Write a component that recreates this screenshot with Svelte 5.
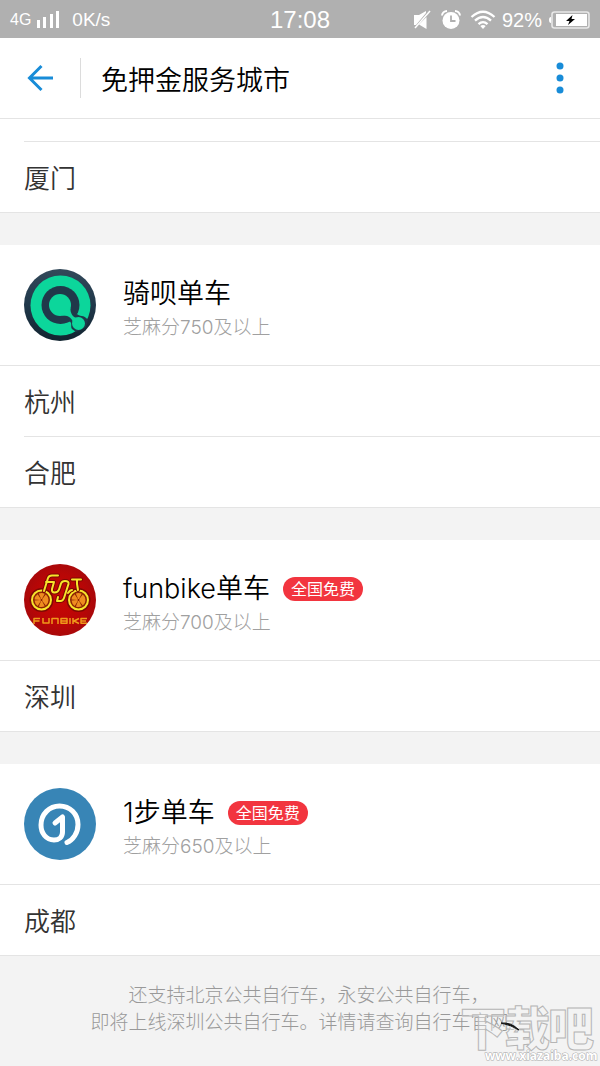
<script>
  const groups = [
    {
      name: '骑呗单车',
      note: '芝麻分750及以上',
      logo: 'qibei',
      free: false,
      cities: ['杭州', '合肥']
    },
    {
      name: 'funbike单车',
      note: '芝麻分700及以上',
      logo: 'funbike',
      free: true,
      cities: ['深圳']
    },
    {
      name: '1步单车',
      note: '芝麻分650及以上',
      logo: 'yibu',
      free: true,
      cities: ['成都']
    }
  ];
</script>

{#snippet qibei()}
  <svg class="logo" viewBox="0 0 72 72" aria-hidden="true">
    <defs>
      <linearGradient id="navy" x1="0" y1="0" x2="0" y2="1">
        <stop offset="0" stop-color="#33495a" />
        <stop offset="0.5" stop-color="#20384a" />
        <stop offset="1" stop-color="#122430" />
      </linearGradient>
    </defs>
    <circle cx="36" cy="36" r="36" fill="url(#navy)" />
    <circle cx="36.500" cy="36.500" r="30" fill="#0cd69b" />
    <circle cx="36.500" cy="36" r="19" fill="#20384a" />
    <path d="M53 45C55 48 60 45 64 51L62 58L52 63L48 60C46 57 49 54 45 52Z" fill="#20384a" />
    <circle cx="36" cy="36" r="11" fill="#0cd69b" />
    <path d="M46.500 39C46 44 49 49 54 49L49 55C49 49 44 46 38 46.500Z" fill="#0cd69b" />
    <circle cx="54.500" cy="54.500" r="6.500" fill="#0cd69b" />
  </svg>
{/snippet}

{#snippet funbike()}
  <svg class="logo" viewBox="0 0 72 72" aria-hidden="true">
    <defs>
      <radialGradient id="red">
        <stop offset="0" stop-color="#c80704" />
        <stop offset="0.7" stop-color="#b90606" />
        <stop offset="1" stop-color="#a9080a" />
      </radialGradient>
    </defs>
    <circle cx="36" cy="36" r="36" fill="url(#red)" />
    {#each [17.5, 54.5] as x}
      <circle cx={x} cy="36" r="9.500" fill="#8d2503" stroke="#7d0803" stroke-width="5" />
      <circle cx={x} cy="36" r="9.500" fill="#8d2503" stroke="#f6e52b" stroke-width="2" />
      <circle cx={x} cy="36" r="4" fill="none" stroke="#ef8d20" stroke-width="6" stroke-dasharray="3.500 0.690" />
    {/each}
    {#each [{ c: '#7d0803', w: 4 }, { c: '#f6e52b', w: 2 }] as s}
      <g fill="none" stroke={s.c} stroke-width={s.w} stroke-linejoin="round" stroke-linecap="round">
        <path d="M20 27L24 14Q25 11.500 28 11.500H34M22 18H29" />
        <path d="M30 18L28 25Q27.500 28.500 30.500 28.500Q34 28.500 35 25.500L37 19.500Q38 17 41 17Q45 17 44.500 20L40 34Q39 37 36.500 37H33L34 33" />
        <path d="M48 15.500H57M53 15.500V20L54 26M44 29Q46 26 48 26" />
      </g>
    {/each}
    <g fill="none" stroke="#ef9a1b" stroke-width="1.500" stroke-linejoin="round">
      <path d="M10 60V54.500H16M10 57H15.500M19 54V59H25V54M28 60V54.500H34V60M37 54.500H43V59.200H37ZM37 57H43M46 54V60M49 54V60M55 54.500L50 57L55 59.500M63 54.500H57V59.200H63M57 57H62" />
    </g>
  </svg>
{/snippet}

{#snippet yibu()}
  <svg class="logo" viewBox="0 0 72 72" aria-hidden="true">
    <circle cx="36" cy="36" r="36" fill="#3885b6" />
    <path
      d="M31 35L38.500 29V44C38.500 49 35 52 30 52C22 52 17 45 17 37C17 26 25.500 18 35.500 18C46 18 54 26 54 36.500C54 45 49 52 43 54.500"
      fill="none"
      stroke="#fff"
      stroke-width="5"
      stroke-linecap="round"
      stroke-linejoin="round"
    />
  </svg>
{/snippet}

<div class="page">
  <div class="status">
    <div class="side">
      <span class="net">4G</span>
      <svg class="bars" width="24" height="18" viewBox="0 0 24 18" aria-hidden="true">
        <path d="M1 9H4V17H1ZM7 6H10V17H7ZM14 3H17V17H14ZM20 0H23V17H20Z" fill="#fff" />
      </svg>
      <span class="speed">0K/s</span>
    </div>
    <time class="clock">17:08</time>
    <div class="side end">
      <svg width="20" height="20" viewBox="0 0 20 20" aria-hidden="true">
        <path d="M2 5H7L14 1V3L4 15H2ZM14.500 7V19L7 14.500Z" fill="#fff" />
        <path d="M18 1L3 18" stroke="#fff" stroke-width="1.500" />
      </svg>
      <svg class="alarm" width="20" height="20" viewBox="0 0 20 20" aria-hidden="true">
        <circle cx="10" cy="10.500" r="8.500" fill="#fff" />
        <path d="M1 5.500A5 5 0 0 1 6 1M14 1A5 5 0 0 1 19 5.500" fill="none" stroke="#fff" stroke-width="2" />
        <path d="M10 5.500V11H14.500" fill="none" stroke="#b0b0b0" stroke-width="1.800" />
      </svg>
      <svg class="wifi" width="26" height="20" viewBox="0 0 26 20" aria-hidden="true">
        <g fill="none" stroke="#fff" stroke-width="2.300">
          <path d="M1.500 7Q13-3.500 24.500 7M5 10.700Q13 3.200 21 10.700M8.500 14.200Q13 10 17.500 14.200" />
        </g>
        <path d="M10.300 16Q13 14 15.700 16L13 19Z" fill="#fff" />
      </svg>
      <span class="percent">92%</span>
      <svg class="battery" width="42" height="18" viewBox="0 0 42 18" aria-hidden="true">
        <rect x="4" y="1" width="37" height="16" rx="2.500" fill="none" stroke="#e8e8e8" stroke-width="1.600" />
        <path d="M3 6Q1 6 1 9Q1 12 3 12Z" fill="#fff" />
        <path d="M8 3H39V15H8Z" fill="#fff" />
        <path d="M24.500 4L18 10H21.500L20 14L27 8H23.500Z" fill="#000" />
      </svg>
    </div>
  </div>

  <header>
    <button class="back" aria-label="返回">
      <svg width="28" height="28" viewBox="0 0 28 28" aria-hidden="true">
        <path d="M15.500 2L3.500 14L15.500 26M3.500 14H27" fill="none" stroke="#188cd8" stroke-width="3" />
      </svg>
    </button>
    <h1>免押金服务城市</h1>
    <button class="more" aria-label="更多">
      <svg width="8" height="32" viewBox="0 0 8 32" aria-hidden="true">
        <g fill="#188cd8">
          <circle cx="4" cy="4" r="3.500" />
          <circle cx="4" cy="16" r="3.500" />
          <circle cx="4" cy="28" r="3.500" />
        </g>
      </svg>
    </button>
  </header>

  <main>
    <ul class="cities first">
      <li>厦门</li>
    </ul>
    {#each groups as g}
      <section>
        <div class="brand">
          {#if g.logo === 'qibei'}
            {@render qibei()}
          {:else if g.logo === 'funbike'}
            {@render funbike()}
          {:else}
            {@render yibu()}
          {/if}
          <div class="info">
            <div class="line">
              <h2>{g.name}</h2>
              {#if g.free}<span class="tag">全国免费</span>{/if}
            </div>
            <p>{g.note}</p>
          </div>
        </div>
        <ul class="cities">
          {#each g.cities as city}
            <li>{city}</li>
          {/each}
        </ul>
      </section>
    {/each}
  </main>

  <footer>
    <p>还支持北京公共自行车，永安公共自行车，<br />即将上线深圳公共自行车。详情请查询自行车官网。</p>
    <div class="mark">
      <svg width="140" height="64" viewBox="0 0 140 64" aria-hidden="true">
        <g class="big">
          <text x="0" y="43" font-size="46">下</text>
          <text x="44" y="43" font-size="46">载</text>
          <text x="88" y="43" font-size="46">吧</text>
        </g>
        <text class="url" x="25" y="58" font-size="12">www.xiazaiba.com</text>
        <path d="M41 21Q51 20 59 28Q51 23 41 21Z" fill="#111" stroke="#111" />
      </svg>
    </div>
  </footer>
</div>

<style>
  :global(body) {
    margin: 0;
    background: #f3f3f3;
  }
  .page {
    font-family: Inter, 'Noto Sans CJK SC', sans-serif;
    color: #000;
    background: #fff;
  }
  h1,
  h2,
  p,
  ul {
    margin: 0;
    padding: 0;
    font-weight: 350;
  }
  .status {
    display: grid;
    grid-template-columns: 1fr auto 1fr;
    align-items: center;
    height: 38px;
    padding: 2px 10px 0;
    background: #b0b0b0;
    color: #fff;
    box-sizing: border-box;
    font-family: 'Liberation Sans', sans-serif;
    line-height: 36px;
  }
  .side {
    display: flex;
    align-items: center;
  }
  .end {
    justify-content: flex-end;
  }
  .net {
    font-size: 16px;
  }
  .bars {
    margin: 0 12px 0 5px;
  }
  .speed {
    font-size: 19px;
  }
  .percent {
    font-size: 20px;
  }
  .clock {
    font-size: 24px;
  }
  .alarm {
    margin: 0 9px;
  }
  .wifi {
    margin-right: 6px;
  }
  .battery {
    margin-left: 6px;
  }
  header {
    display: flex;
    align-items: center;
    height: 80px;
    border-bottom: 1px solid #e4e4e4;
    padding: 0 24px;
  }
  button {
    display: flex;
    align-items: center;
    border: 0;
    padding: 0;
    background: none;
  }
  .back {
    width: 57px;
    height: 40px;
    border-right: 1px solid #dcdcdc;
  }
  .back svg {
    margin-left: 2px;
  }
  h1 {
    flex: 1;
    margin-left: 20px;
    padding-top: 6px;
    font-size: 27px;
    line-height: 40px;
  }
  .more {
    justify-content: center;
    width: 32px;
    height: 40px;
  }
  .cities {
    list-style: none;
    border-bottom: 1px solid #e4e4e4;
    font-size: 26px;
    line-height: 66px;
    color: #333;
  }
  li {
    margin-left: 24px;
    padding-top: 4px;
    border-top: 1px solid #e4e4e4;
  }
  section .cities li:first-child {
    margin-left: 0;
    padding-left: 24px;
  }
  .first {
    margin-top: 22px;
  }
  section {
    border-top: 32px solid #f3f3f3;
  }
  .brand {
    display: flex;
    align-items: center;
    height: 120px;
    padding: 0 24px;
  }
  .logo {
    flex: none;
    width: 72px;
    height: 72px;
    margin-right: 27px;
  }
  .info {
    padding-top: 6px;
  }
  .line {
    display: flex;
    align-items: center;
    gap: 13px;
  }
  h2 {
    font-size: 27px;
    line-height: 40px;
  }
  .tag {
    padding: 0 8px;
    border-radius: 12px;
    background: #f2353f;
    color: #fff;
    font-size: 16px;
    line-height: 24px;
  }
  .info p {
    font-size: 19px;
    line-height: 28px;
    font-weight: 300;
    color: #a0a0a0;
  }
  footer {
    position: relative;
    min-height: 110px;
    padding: 26px 0 0 18px;
    box-sizing: border-box;
    background: #f3f3f3;
    text-align: center;
    font-size: 19px;
    line-height: 27px;
    color: #999;
  }
  footer p {
    font-weight: 300;
  }
  .mark {
    position: absolute;
    right: 0;
    bottom: 0;
  }
  .mark svg {
    display: block;
  }
  .mark text {
    stroke: #b5b5b5;
    stroke-width: 1;
  }
  .big {
    font-family: 'Noto Sans CJK SC', sans-serif;
    font-weight: 900;
    fill: #f3f3f3;
    fill-opacity: 0.4;
  }
  .mark .url {
    font-family: 'Open Sans', sans-serif;
    font-weight: 700;
    fill: #fff;
    stroke: #aaa;
    paint-order: stroke;
  }
</style>
